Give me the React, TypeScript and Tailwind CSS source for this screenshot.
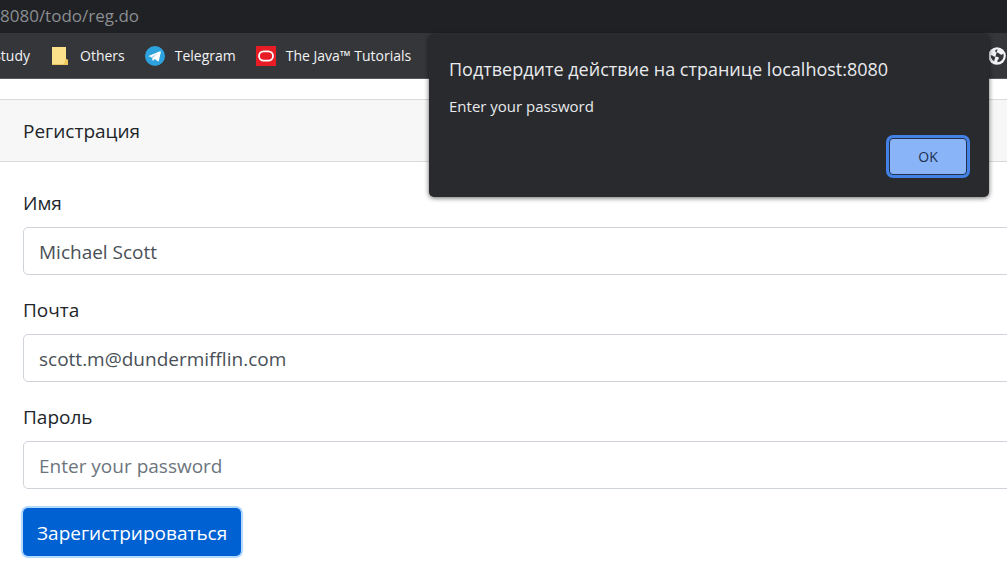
import { useState } from "react";

function FolderIcon() {
  return (
    <svg className="h-[18px] w-4 shrink-0" viewBox="0 0 16 18" aria-hidden="true">
      <path d="M0 0h14v12l2 1v5H0z" fill="#fce08a" />
      <path d="M13 12h1.800l1.200 1.200V18h-4v-2.200l1-1z" fill="#efc95c" />
      <path d="M0 17h16v1H0z" fill="#e9c65f" />
    </svg>
  );
}

function TelegramIcon() {
  return (
    <svg className="size-5 shrink-0" viewBox="0 0 20 20" aria-hidden="true">
      <circle cx="10" cy="10" r="10" fill="#2ea2dc" />
      <path d="M3.600 9.900 15 5.300c.6-.2 1 .1.8.9l-1.900 8.500c-.1.700-.6.800-1.100.5l-3-2.200-1.500 1.500c-.3.300-.7.200-.8-.3l-.9-3-2.900-.9c-.500-.1-.500-.3-.1-.4z" fill="#fff" />
      <path d="m6.700 11 5.800-3.700-4.700 4.600-.2 2z" fill="#a9cfe6" />
    </svg>
  );
}

function OracleIcon() {
  return (
    <svg className="size-5 shrink-0" viewBox="0 0 20 20" aria-hidden="true">
      <path d="M0 0h20v20H0z" fill="#e81c24" />
      <rect x="3" y="5.300" width="14" height="9.400" rx="4.700" fill="none" stroke="#fff" strokeWidth="1.800" />
    </svg>
  );
}

function GlobeIcon() {
  return (
    <svg className="size-[18px] shrink-0" viewBox="0 0 18 18" aria-hidden="true">
      <circle cx="9" cy="9" r="8.800" fill="#f1f3f4" />
      <path d="M9.500 2.200c-1.600.3-2.500 1-2.300 2.100.2 1.200 1.600 1.200 2.700 1.500 1.600.4 1.700 1.700 3.100 1.900 1 .1 1.900-.5 2.300-1.100.7 2.100.4 4.400-1 6.200-1.200 1.600-3 2.400-4.800 2.500v-1.700c0-.7.500-.9 1-1.400.600-.6.400-1.700-.4-2.100-1.300-.6-2.800-.2-4.100-.6-1-.300-1.500-1.400-2.500-1.300l-.8.3c.1 2.300 1.300 4.500 3.400 5.700" fill="#35363a" />
    </svg>
  );
}

const bookmarks = [
  { label: "Others", icon: <FolderIcon />, box: "gap-3" },
  { label: "Telegram", icon: <TelegramIcon />, box: "gap-[10px]" },
  { label: "The Java™ Tutorials", icon: <OracleIcon />, box: "gap-[10px]" },
];

const inputClass =
  "h-12 w-full rounded-[5px] border border-[#ced4da] bg-white px-[15px] pt-0.5 text-[19px] text-[#495057] outline-none placeholder:text-[#6c757d]";

export default function App() {
  const [open, setOpen] = useState(true);

  return (
    <div className="relative min-h-screen overflow-hidden bg-white font-['Open_Sans','Noto_Sans',sans-serif] text-[#212529]">
      <header>
        <div className="flex h-[33px] items-center bg-[#202124] pb-0.5 text-[17px] text-[#8b8e92]">
          8080/todo/reg.do
        </div>
        <nav className="flex h-[46px] items-center gap-5 border-b border-[#56585c] bg-[#35363a] text-[14px] whitespace-nowrap text-[#f1f3f4]">
          <a href="#study" className="flex w-8 shrink-0 justify-end overflow-hidden pr-0.5">
            Study
          </a>
          {bookmarks.map((item) => (
            <a key={item.label} href="#bookmark" className={`flex shrink-0 items-center ${item.box}`}>
              {item.icon}
              {item.label}
            </a>
          ))}
          <a href="#web" aria-label="Web" className="ml-auto pr-px">
            <GlobeIcon />
          </a>
        </nav>
      </header>

      <main className="pt-5">
        <h1 className="flex h-[63px] items-center border-y border-[#d9d9d9] bg-[#f7f7f7] px-[23px] pt-0.5 text-[19px]">
          Регистрация
        </h1>
        <form
          className="flex flex-col items-start gap-[19px] pt-[25px] pl-[23px] text-[19px]"
          onSubmit={(event) => event.preventDefault()}
        >
          <div className="-mr-2 flex flex-col gap-2 self-stretch">
            <label htmlFor="name" className="leading-8">Имя</label>
            <input id="name" className={inputClass} defaultValue="Michael Scott" />
          </div>
          <div className="-mr-2 flex flex-col gap-2 self-stretch">
            <label htmlFor="email" className="leading-8">Почта</label>
            <input id="email" className={inputClass} defaultValue="scott.m@dundermifflin.com" />
          </div>
          <div className="-mr-2 flex flex-col gap-2 self-stretch">
            <label htmlFor="password" className="leading-8">Пароль</label>
            <input id="password" type="password" className={inputClass} placeholder="Enter your password" />
          </div>
          <button
            type="submit"
            className="h-12 rounded-[5px] bg-[#0062d2] px-[14px] pt-0.5 text-white ring-2 ring-[#b5d8ff]"
          >
            Зарегистрироваться
          </button>
        </form>
      </main>

      {open && (
        <div
          role="alertdialog"
          aria-labelledby="dialog-title"
          aria-describedby="dialog-message"
          className="absolute top-[34px] right-[18px] flex w-[560px] flex-col rounded-[5px] bg-[#292a2d] px-5 pt-[22px] pb-[22px] text-[#e8eaed] shadow-[0_1px_5px_rgba(0,0,0,0.6)]"
        >
          <h2 id="dialog-title" className="text-[18px] leading-[26px]">
            Подтвердите действие на странице localhost:8080
          </h2>
          <p id="dialog-message" className="mt-3 text-[15px] leading-6">
            Enter your password
          </p>
          <button
            type="button"
            onClick={() => setOpen(false)}
            className="mt-5 mr-0.5 h-[37px] w-[78px] self-end rounded-[4px] border border-[#202f4d] bg-[#8ab4f8] text-[14px] font-medium text-[#202f4d] ring-[3px] ring-[#4381e6]"
          >
            OK
          </button>
        </div>
      )}
    </div>
  );
}
